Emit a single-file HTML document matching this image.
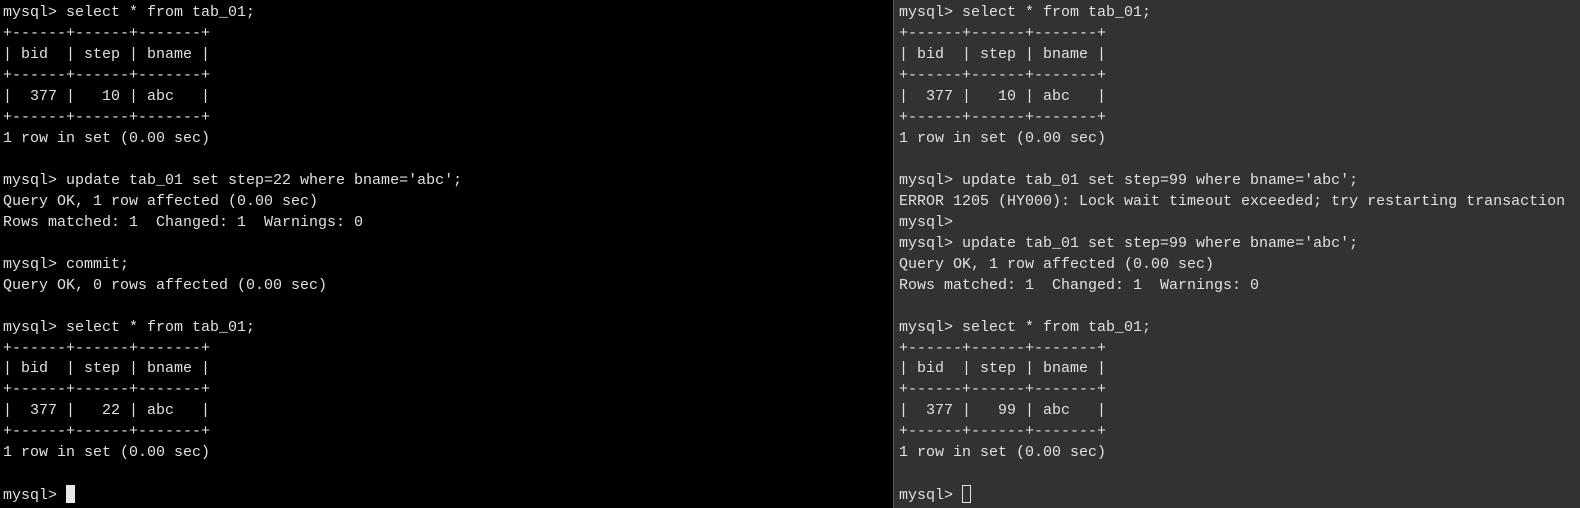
<!DOCTYPE html>
<html><head><meta charset="utf-8"><style>
html,body{margin:0;padding:0;width:1580px;height:508px;overflow:hidden;background:#000;}
.p{position:absolute;top:3px;font-family:"Liberation Mono",monospace;font-size:15px;line-height:20.97px;color:#e0e0e0;white-space:pre;margin:0;}
#l{left:3px;}
#rbg{position:absolute;left:894px;top:0;width:686px;height:508px;background:#323232;}
#div{position:absolute;left:893px;top:0;width:1px;height:508px;background:#5a5a5a;}
#r{left:899px;}
.cur{display:inline-block;width:9px;height:18px;background:#e8e8e8;vertical-align:-4px;}
.curo{display:inline-block;width:9px;height:18px;border:1px solid #e0e0e0;vertical-align:-4px;box-sizing:border-box;}
</style></head><body>
<div id="rbg"></div><div id="div"></div>
<pre class="p" id="l">mysql&gt; select * from tab_01;
+------+------+-------+
| bid  | step | bname |
+------+------+-------+
|  377 |   10 | abc   |
+------+------+-------+
1 row in set (0.00 sec)

mysql&gt; update tab_01 set step=22 where bname='abc';
Query OK, 1 row affected (0.00 sec)
Rows matched: 1  Changed: 1  Warnings: 0

mysql&gt; commit;
Query OK, 0 rows affected (0.00 sec)

mysql&gt; select * from tab_01;
+------+------+-------+
| bid  | step | bname |
+------+------+-------+
|  377 |   22 | abc   |
+------+------+-------+
1 row in set (0.00 sec)

mysql&gt; <span class="cur"></span></pre>
<pre class="p" id="r">mysql&gt; select * from tab_01;
+------+------+-------+
| bid  | step | bname |
+------+------+-------+
|  377 |   10 | abc   |
+------+------+-------+
1 row in set (0.00 sec)

mysql&gt; update tab_01 set step=99 where bname='abc';
ERROR 1205 (HY000): Lock wait timeout exceeded; try restarting transaction
mysql&gt;
mysql&gt; update tab_01 set step=99 where bname='abc';
Query OK, 1 row affected (0.00 sec)
Rows matched: 1  Changed: 1  Warnings: 0

mysql&gt; select * from tab_01;
+------+------+-------+
| bid  | step | bname |
+------+------+-------+
|  377 |   99 | abc   |
+------+------+-------+
1 row in set (0.00 sec)

mysql&gt; <span class="curo"></span></pre>
</body></html>
